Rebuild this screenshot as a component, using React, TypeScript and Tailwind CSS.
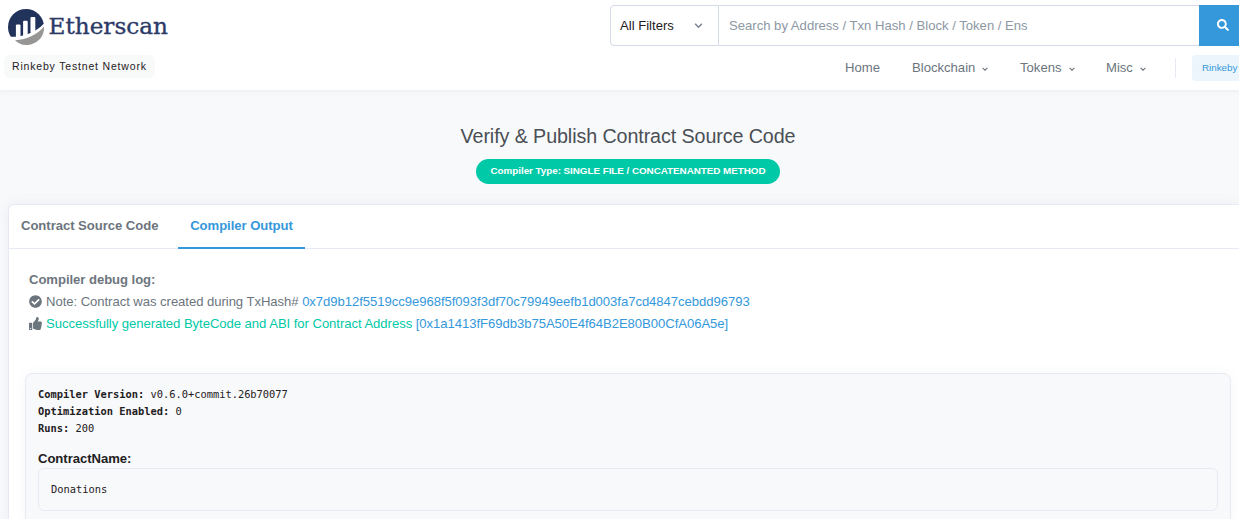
import type { ReactNode } from "react";
import { FaCheckCircle, FaSearch, FaThumbsUp } from "react-icons/fa";

function Chevron({ className }: { className: string }) {
  return (
    <svg viewBox="0 0 10 6" className={className} fill="none" stroke="currentColor" strokeWidth="1.8">
      <path d="M1 1l4 4 4-4" />
    </svg>
  );
}

function Logo() {
  return (
    <svg width="164" height="38" viewBox="0 0 164 38" role="img" aria-label="Etherscan">
      <circle cx="18" cy="19" r="18" fill="#21325b" />
      <g fill="#fff">
        <rect x="7.9" y="16.6" width="4.6" height="16" rx="1" />
        <rect x="15.1" y="12.8" width="4.6" height="16" rx="1" />
        <rect x="22.5" y="9" width="4.8" height="16" rx="1" />
        <path d="M1.5 28.8C14 29.5 27 25 35.5 16L38 16V38H0Z" />
      </g>
      <path d="M7 32.3C19 31.8 30 26 36 18.5C36.8 29 28.5 37 18 37C13.8 37 10 35.2 7 32.3Z" fill="#979695" />
      <text
        x="40.5"
        y="26.3"
        textLength="119.5"
        lengthAdjust="spacingAndGlyphs"
        fill="#2b3a67"
        stroke="#2b3a67"
        strokeWidth="0.35"
        className="font-['DejaVu_Serif',serif] text-[22.5px]"
      >
        Etherscan
      </text>
    </svg>
  );
}

function NavItem({ label, className }: { label: string; className: string }) {
  return (
    <a className={`flex items-center ${className}`}>
      {label}
      <Chevron className="mt-[3px] ml-[7px] h-[4px] w-[6px]" />
    </a>
  );
}

function LogLine({ icon, children }: { icon: ReactNode; children: ReactNode }) {
  return (
    <div className="flex h-[22px] items-center whitespace-pre">
      <span className="mr-[4px] -mt-[2px] text-[#6c757e]">{icon}</span>
      {children}
    </div>
  );
}

export default function App() {
  return (
    <div className="h-[519px] w-full overflow-hidden bg-[#f8f9fb] font-['Liberation_Sans',Arial,sans-serif] text-[13.1px] text-[#6c757e]">
      <header className="relative flex h-[90px] justify-between bg-white shadow-[0_1px_5px_rgba(140,152,164,0.12)]">
        <div className="flex flex-col items-start pt-[8px] pl-[4px]">
          <div className="pl-[4px]">
            <Logo />
          </div>
          <span className="mt-[9px] flex h-[23px] w-[151px] items-center rounded-md bg-[#f8fafa] pl-[8px] text-[10.5px] tracking-[0.82px] whitespace-nowrap text-[#1e2022]">
            Rinkeby Testnet Network
          </span>
        </div>
        <div className="flex w-[629px] shrink-0 flex-col pt-[5px]">
          <div className="flex h-[41px]">
            <div className="flex w-[109px] items-center justify-between rounded-l border border-[#d5dae8] pr-[15px] pl-[9px] text-[#1e2022]">
              All Filters
              <Chevron className="h-[5px] w-[9px] text-[#77838f]" />
            </div>
            <div className="flex flex-1 items-center border-y border-[#d5dae8] pl-[10px] text-[#8c98a4]">
              Search by Address / Txn Hash / Block / Token / Ens
            </div>
            <button className="flex w-[40px] items-center bg-[#3498db] pb-[2px] pl-[18px] text-white">
              <FaSearch size={12} />
            </button>
          </div>
          <nav className="mt-[9px] flex h-[26px] items-center whitespace-nowrap">
            <a className="ml-[235px] w-[67px]">Home</a>
            <NavItem label="Blockchain" className="w-[108px]" />
            <NavItem label="Tokens" className="w-[86px]" />
            <NavItem label="Misc" className="w-[69px]" />
            <span className="h-[20px] w-px bg-[#e7eaf3]" />
            <span className="ml-[16px] flex h-[26px] w-[47px] items-center rounded-l bg-[#ebf5fb] pl-[10px] text-[9.8px] text-[#3498db]">
              Rinkeby
            </span>
          </nav>
        </div>
      </header>

      <main className="flex flex-col">
        <div className="flex h-[114px] flex-col items-center pt-[34px] pl-[17px]">
          <h1 className="h-[24px] text-[19.7px] leading-[24px] tracking-[-0.09px] whitespace-nowrap text-[#4a4f55]">
            Verify &amp; Publish Contract Source Code
          </h1>
          <span className="mt-[11px] flex h-[25px] w-[304px] items-center justify-center rounded-full bg-[#00c9a7] text-[9.85px] font-bold tracking-[-0.04px] whitespace-nowrap text-white">
            Compiler Type: SINGLE FILE / CONCATENANTED METHOD
          </span>
        </div>

        <section className="ml-[8px] h-[340px] rounded-tl-md border-t border-l border-[#e7eaf3] bg-white shadow-[0_0_12px_rgba(140,152,164,0.12)]">
          <div className="flex h-[44px] border-b border-[#e7eaf3] font-bold tracking-[-0.04px]">
            <a className="flex h-[44px] w-[169px] items-center pb-[3px] pl-[12px]">Contract Source Code</a>
            <a className="flex h-[44px] w-[127px] items-center justify-center border-b-2 border-[#3498db] pb-px text-[#3498db]">
              Compiler Output
            </a>
          </div>
          <div className="pt-[20px] pl-[20px] tracking-[-0.048px]">
            <div className="flex h-[22px] items-center font-bold">Compiler debug log:</div>
            <LogLine icon={<FaCheckCircle size={13} />}>
              Note: Contract was created during TxHash#{" "}
              <a className="text-[#3498db]">0x7d9b12f5519cc9e968f5f093f3df70c79949eefb1d003fa7cd4847cebdd96793</a>
            </LogLine>
            <LogLine icon={<FaThumbsUp size={13} />}>
              <span className="text-[#00c9a7]">Successfully generated ByteCode and ABI for Contract Address </span>
              <a className="text-[#3498db]">[0x1a1413fF69db3b75A50E4f64B2E80B00CfA06A5e]</a>
            </LogLine>
          </div>
          <div className="mt-[38px] mr-[8px] ml-[16px] h-[180px] rounded-lg border border-[#e7eaf3] bg-[#f8f9fb] px-[12px] pt-[12px] text-[#1e2022] shadow-[0_0_12px_rgba(140,152,164,0.08)]">
            <div className="font-['DejaVu_Sans_Mono',monospace] text-[10.39px] leading-[17px] whitespace-pre">
              <div><b>Compiler Version:</b> v0.6.0+commit.26b70077</div>
              <div><b>Optimization Enabled:</b> 0</div>
              <div><b>Runs:</b> 200</div>
            </div>
            <div className="mt-[12px] h-[19px] leading-[20px] font-bold tracking-[-0.04px]">ContractName:</div>
            <pre className="h-[43px] rounded-md border border-[#e7eaf3] pl-[12px] font-['DejaVu_Sans_Mono',monospace] text-[10.39px] leading-[41px]">Donations</pre>
          </div>
        </section>
      </main>
    </div>
  );
}
